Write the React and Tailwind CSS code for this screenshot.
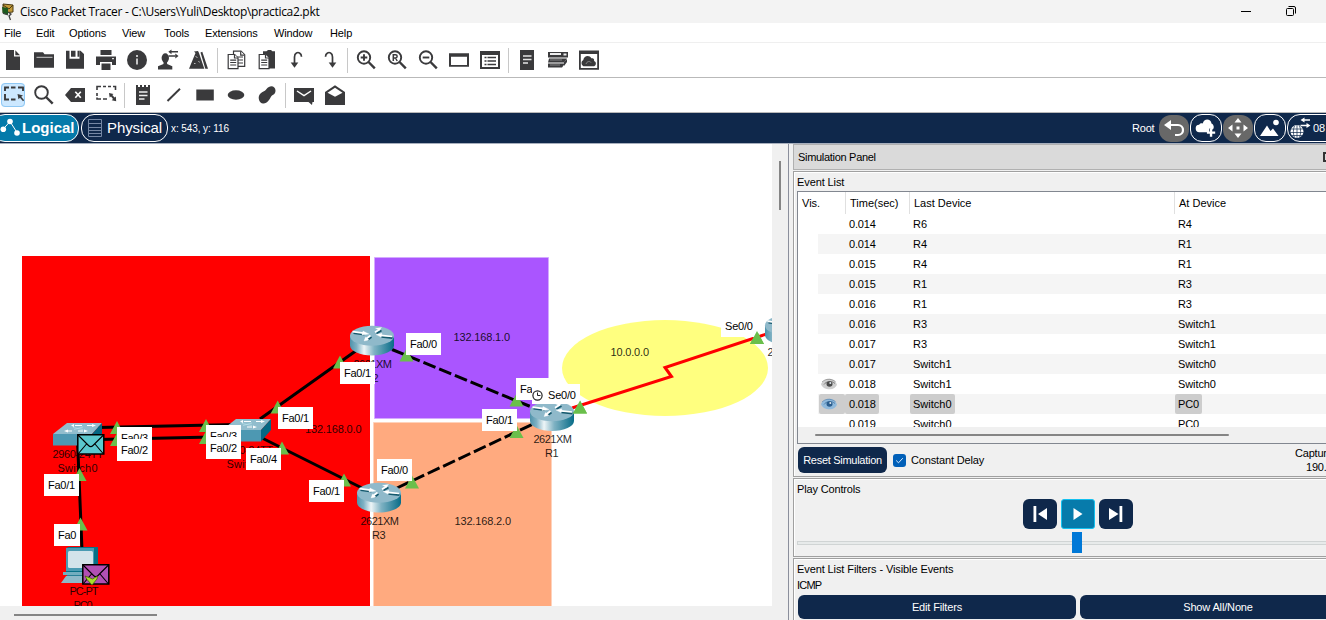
import React from "react";

const NAVY = "#0f284b";
const INK = "#3a3a3c";

function Icon({ children, active }) {
  return (
    <div
      className={
        active
          ? "mr-[7px] h-6 w-6 shrink-0 rounded-sm bg-[#cce8ff] outline outline-1 -outline-offset-1 outline-[#8fc8f4]"
          : "mr-[7px] h-6 w-6 shrink-0"
      }
    >
      <svg width="24" height="24" viewBox="0 0 24 24" fill={INK} className="block">
        {children}
      </svg>
    </div>
  );
}

function Sep() {
  return <div className="-ml-px mr-1.5 h-[25px] w-px shrink-0 bg-[#c8c8c8]" />;
}

function Magnifier({ children }) {
  return (
    <Icon>
      <circle cx="10" cy="9.5" r="6.2" fill="none" stroke={INK} strokeWidth="1.9" />
      <path d="M14.5 14l6.3 6.3" stroke={INK} strokeWidth="2.4" />
      {children}
    </Icon>
  );
}

function MainToolbar() {
  return (
    <div className="flex h-[35px] items-center border-b border-[#b9b9b9] pl-px">
      <Icon>
        <path d="M5 2h8v6.5h6V22H5z" />
        <path d="M14.3 2.2L19 7.2h-4.7z" />
      </Icon>
      <Icon>
        <path d="M2 4.3h9l1.5 2H22v13.4H2z" />
        <path d="M4.5 9.3h16" stroke="#ddd" strokeWidth="0.9" />
      </Icon>
      <Icon>
        <path d="M3 2.7h3.5v8h10v-8h1L21 6v14.7H3z" />
        <path d="M8 2.7h4.5v6H8zM14.500 2.700h2v6h-2z" />
      </Icon>
      <Icon>
        <path d="M6.500 2h11v5h-11zM2 8.500h20V17h-4v-3H6v3H2z" />
        <path d="M7.500 15.500h9V22h-9z" />
        <path d="M18 10.700h2" stroke="#fff" />
      </Icon>
      <Icon>
        <circle cx="12" cy="12" r="10" />
        <path d="M12 10.500v6M12 7v2" stroke="#ddd" strokeWidth="1.700" />
      </Icon>
      <Icon>
        <ellipse cx="9.300" cy="10" rx="3.700" ry="4.700" />
        <path d="M7.500 13h3.600v3l5.200 2.300v3.200H2v-3.200L7.500 16z" />
        <path d="M14 3.800h8M12.500 8h7" stroke={INK} strokeWidth="1.400" />
        <path d="M12.300 3.800l3.200-2.400v4.800zM22.500 8l-3.200-2.400v4.800z" />
      </Icon>
      <Icon>
        <path d="M2 20.700L8.500 5 7 3.500 11 3l1 2 5.300 15.700z" />
        <path d="M13.500 4.500l1.800-.8L21 20.700h-2.700z" />
        <path d="M8.500 8.500l2 1M7 15.500h1.500M11.500 13l1 1.500" stroke="#bbb" strokeWidth="1" fill="none" />
      </Icon>
      <Sep />
      <Icon>
        <g fill="#fff" stroke={INK} strokeWidth="1.200">
          <path d="M9.500 3.200h7.500l3.700 3.600v11.500H9.500z" />
          <path d="M16.700 3.200v4h4M12 9h7M12 12h7M12 15h7" />
          <path d="M4.200 6.500h6.500L14 10v10.700H4.200z" />
          <path d="M10.500 6.500V10H14M6.200 12.200h6M6.200 14.500h6M6.200 17h6" />
        </g>
      </Icon>
      <Icon>
        <path d="M8 3.200h3.500L13 2h3l1.300 1.200H20V20.500H8z" />
        <g fill="#fff" stroke={INK} strokeWidth="1.200">
          <path d="M4.200 6.500h6.500L14 10v10.700H4.200z" />
          <path d="M10.500 6.500V10H14M6.200 12.200h6M6.200 14.500h6M6.200 17h6" />
        </g>
      </Icon>
      <Icon>
        <path d="M8.500 16V9C8.500 4.500 12 4 13.500 5c1.300.800 2 2 2 3.700" fill="none" stroke={INK} strokeWidth="1.700" />
        <path d="M4.700 14.500h7.600l-3.800 5.300z" />
      </Icon>
      <Icon>
        <path d="M15.500 16V9c0-4.500-3.500-5-5-4-1.300.800-2 2-2 3.700" fill="none" stroke={INK} strokeWidth="1.700" />
        <path d="M11.700 14.500h7.600l-3.800 5.300z" />
      </Icon>
      <Sep />
      <Magnifier>
        <path d="M10 6.200v6.600M6.700 9.500h6.600" stroke={INK} strokeWidth="1.900" />
      </Magnifier>
      <Magnifier>
        <path d="M8.300 13V6.700h2.200a1.600 1.600 0 010 3.300H8.500m2 0l1.700 3" fill="none" stroke={INK} strokeWidth="1.500" />
      </Magnifier>
      <Magnifier>
        <path d="M6.700 9.500h6.600" stroke={INK} strokeWidth="1.900" />
      </Magnifier>
      <Icon>
        <path d="M2 5.300h20v13.500H2zM4 8.800v8.200h16V8.800z" fillRule="evenodd" />
      </Icon>
      <Icon>
        <path d="M2 3h20v18H2zM4 7v12h16V7z" fillRule="evenodd" />
        <path d="M6.500 9.500h2M6.500 13h2M6.500 16.500h2M9.500 9.500H18M9.500 13H18M9.500 16.500H18" stroke={INK} strokeWidth="1.600" />
      </Icon>
      <Sep />
      <Icon>
        <path d="M5 2h14v20H5z" />
        <path d="M8 8h8.500M8 11.500h8.500M8 15h5" stroke="#e5e5e5" strokeWidth="1.300" />
      </Icon>
      <Icon>
        <path d="M2 4h20v5.500H2zM3 10.500h18l-3 4H2zM2 15.500h17l-3 4H2z" />
        <path d="M4 6h11M17.500 6.500h3" stroke="#eee" strokeWidth="1.800" />
        <path d="M4 12h12M4 17h10" stroke="#999" strokeWidth="0.800" />
        <path d="M18 14l3-3v3l-3 4z" />
      </Icon>
      <Icon>
        <path d="M2 2.500h20v19.200H2zM3.800 6v14h16.400V6z" fillRule="evenodd" />
        <path d="M6.300 18.200a3.500 3.500 0 010-6.200c.7-4.700 6.500-5 8-1.700 3-.3 3 2 2.800 2.700 2.500 1 2.300 4.300 0 5.200z" />
        <path d="M9 16c1-3 4-3 5-1.500" stroke="#888" fill="none" />
      </Icon>
    </div>
  );
}

function DrawToolbar() {
  return (
    <div className="flex h-[35px] items-center border-b border-[#b9b9b9] pl-px">
      <Icon active>
        <path d="M4 8V4.500h4M10 4.500h4.500M17 4.500h5V8M4 11v5.500h4M10 16.500h4.500" fill="none" stroke={INK} strokeWidth="1.900" />
        <path d="M16.500 11l5.500 1.500-1.800 1.300 3 3.500-1.200 1-3-3.500-1.500 1.500z" />
      </Icon>
      <Icon>
        <circle cx="9.500" cy="9.500" r="6.300" fill="none" stroke={INK} strokeWidth="1.900" />
        <path d="M14 14l6.700 6.700" stroke={INK} strokeWidth="2.400" />
      </Icon>
      <Icon>
        <path d="M2 12l6-7h14v14H8z" />
        <path d="M12.300 8.800l5.500 6M17.800 8.800l-5.500 6" stroke="#fff" strokeWidth="1.700" />
      </Icon>
      <Icon>
        <path d="M3 7V3.500h4M9 3.500h3M14 3.500h3M19 3.500h2.500V7M3 10v3M3 14.500V16h4M9 16h4" fill="none" stroke={INK} strokeWidth="1.600" />
        <path d="M15 10l4.500 1-1.200 1 2.200 2.500 1.300-1 .4 4.700-4.500-1 1.300-1.200-2-2.500-1.300 1z" />
      </Icon>
      <Sep />
      <Icon>
        <path d="M5 2h2v2h2V2h2v2h2V2h2v2h2V2h2v20H5z" />
        <path d="M8 9h8.500M8 12.500h8.500M8 16h5.500" stroke="#eee" strokeWidth="1.300" />
      </Icon>
      <Icon>
        <path d="M5.500 18L18 5.700" stroke={INK} strokeWidth="1.900" />
      </Icon>
      <Icon>
        <path d="M3.300 6.500h17.500v11H3.300z" />
      </Icon>
      <Icon>
        <ellipse cx="12" cy="12" rx="8.300" ry="4.700" />
      </Icon>
      <Icon>
        <path d="M11.500 6C15 1.500 20.500 3 20.500 7.500S17 11.500 15.800 14 12.500 20 8.500 20.500 2.500 15 4.500 11.800 9.500 9 11.500 6z" />
      </Icon>
      <Sep />
      <Icon>
        <path d="M2 5h20v14h-1.500l-.5 3-3.500-3H2z" />
        <path d="M5 8l7 4.700L19 8" fill="none" stroke="#fff" strokeWidth="1.500" />
      </Icon>
      <Icon>
        <path d="M2 9l10-6.800L22 9v13H2z" />
        <path d="M4.500 9.700L12 4.700l7.500 5L12 13.700z" fill="#fff" />
      </Icon>
    </div>
  );
}

function NavBar() {
  return (
    <div className="flex h-[31px] items-center overflow-hidden border-b border-[#a7afbd] bg-[#0f284b] text-[11px] text-white">
      <div className="-ml-2 flex h-7 w-[87px] shrink-0 items-center rounded-[13px] border border-white bg-[#047aaa] pl-[7px]">
        <svg width="21" height="24" viewBox="0 0 21 24" fill="#fff" className="shrink-0">
          <path d="M3.300 13L10 5.500 17.300 17" fill="none" stroke="#fff" strokeWidth="1" />
          <circle cx="10" cy="5.500" r="2.800" />
          <circle cx="3.300" cy="13.300" r="2.800" />
          <circle cx="17" cy="17" r="2.800" />
        </svg>
        <span className="ml-[1px] text-[15px] leading-7 font-bold">Logical</span>
      </div>
      <div className="ml-[2px] flex h-7 w-[87px] shrink-0 items-center rounded-[13px] border border-white pl-1">
        <svg width="17" height="20" viewBox="0 0 17 20" className="shrink-0">
          <path d="M2.500 1.500h13v17h-13zM2.500 5.500h13M2.500 9.500h13M2.500 12.500h13M2.500 15.500h13" fill="none" stroke="#7587a4" />
        </svg>
        <span className="ml-1 text-[15px] leading-7 tracking-[-0.1px]">Physical</span>
      </div>
      <span className="ml-[3px] text-[10px] tracking-[-0.1px] whitespace-pre">x: 543, y: 116</span>
      <span className="ml-auto w-[27px] shrink-0 tracking-[-0.2px]">Root</span>
      <div className="flex w-[167px] shrink-0 items-center overflow-hidden">
        <div className="flex h-[27px] w-[30px] shrink-0 items-center justify-center rounded-[12px] bg-[#686868]">
          <svg width="20" height="17" viewBox="0 0 20 17" fill="#fff">
            <path d="M0 5L7 0v10z" />
            <path d="M6 5h8a4.800 4.800 0 010 10h-3" fill="none" stroke="#fff" strokeWidth="2.200" />
          </svg>
        </div>
        <div className="ml-px flex h-7 w-8 shrink-0 items-center justify-center rounded-[12px] border border-white">
          <svg width="22" height="22" viewBox="0 0 24 24" fill="#fff" className="shrink-0">
            <path d="M5 16.500a4 4 0 01-.5-8C6 6 8 7 8.500 7c1-6 9-5.500 9.500 0 3 1.500 3 5 1.500 6.500l-4-1v4z" />
            <path d="M17.500 12.500v9M13 17h9" stroke="#fff" strokeWidth="2.600" />
          </svg>
        </div>
        <div className="ml-px flex h-[27px] w-[30px] shrink-0 items-center justify-center rounded-[12px] bg-[#686868]">
          <svg width="22" height="22" viewBox="0 0 22 22" fill="#fff">
            <path d="M11 1l3.500 4.500h-7zM11 21l3.500-4.500h-7zM1 11l4.500-3.500v7zM21 11l-4.500-3.500v7zM9.500 9.500h3v3h-3z" />
          </svg>
        </div>
        <div className="ml-px flex h-7 w-8 shrink-0 items-center justify-center rounded-[12px] border border-white">
          <svg width="22" height="20" viewBox="0 0 22 20" fill="#fff">
            <path d="M1 18L8 7.500l3.500 5.500L14 10.500l5.500 7.500z" />
            <circle cx="17" cy="4.500" r="2.800" />
          </svg>
        </div>
        <div className="ml-px flex h-7 w-20 shrink-0 items-center rounded-l-[13px] border border-white pl-[2px]">
          <svg width="22" height="24" viewBox="0 0 22 24" fill="#fff" className="shrink-0">
            <circle cx="7" cy="15.500" r="6.500" />
            <path d="M1 13h12M.500 16.500h13M2 19.500h10M4.500 10c-1.500 3-1.500 8 0 11.500M9.500 10c1.500 3 1.500 8 0 11.500M7 9v13" fill="none" stroke={NAVY} strokeWidth="0.700" />
            <path d="M12.500 4h7.500M10.500 9.500h7" stroke="#fff" strokeWidth="1.500" />
            <path d="M10.500 4l4-2.500v5zM20.500 9.500l-4-2.500v5z" />
          </svg>
          <span className="ml-px">08</span>
        </div>
      </div>
    </div>
  );
}

const TRIANGLES = [
  [117, 421], [117, 433], [79.500, 468], [80.500, 517.500], [206, 419], [206, 431],
  [277.700, 400.500], [340, 355.500], [282, 441.500], [344, 473.500], [412, 475.500],
  [406.500, 348.500], [516.500, 393.500], [516.500, 425], [580, 400.500], [757, 331],
];

const LABELS = [
  [117, 427, 35, "Fa0/3"], [117, 439, 35, "Fa0/2"], [44, 474, 35, "Fa0/1"], [54, 524, 26, "Fa0"],
  [206, 425, 35, "Fa0/3"], [206, 437, 35, "Fa0/2"], [246, 448, 35, "Fa0/4"], [278, 407, 35, "Fa0/1"],
  [340, 362, 35, "Fa0/1"], [406, 333, 35, "Fa0/0"], [309, 480, 35, "Fa0/1"], [377, 459, 35, "Fa0/0"],
  [516, 378, 35, "Fa"], [482, 409, 35, "Fa0/1"],
];

const CAPTIONS = [
  [52.500, 458, 51, "2960-24TT"], [57.500, 472, 40, "Switch0"], [69.500, 595, 29, "PC-PT"], [73.500, 609, 19, "PC0"],
  [222, 454, 51, "2960-24TT"], [226.500, 468, 40, "Switch1"],
  [353.500, 368, 38.500, "2621XM"], [365, 382, 13.500, "R2"],
  [360.500, 525, 38.500, "2621XM"], [372, 539, 13.500, "R3"],
  [533.500, 443, 38.500, "2621XM"], [545, 457, 13.500, "R1"],
  [305, 433, 56.500, "132.168.0.0"], [453.500, 341, 56.500, "132.168.1.0"], [454.500, 525, 56.500, "132.168.2.0"],
  [610.500, 356, 38.500, "10.0.0.0"], [767.500, 356, 38.500, "2621XM"],
];

function Router({ x, y }) {
  return (
    <g transform={`translate(${x} ${y})`}>
      <path d="M0 10v10c0 5.500 10 10 22 10s22-4.500 22-10V10z" fill="url(#routerBody)" />
      <ellipse cx="22" cy="10.300" rx="22" ry="10" fill="#8fb9ca" />
      <g transform="translate(.5 1)" fill="#14586d" stroke="#14586d">
        <path d="M3 6.500l11 1.500M31 4l-5 3M42 11.500l-11-1.200M21 10.500l-4 3" strokeWidth="1.800" />
      </g>
      <g fill="#fff" stroke="#fff">
        <path d="M2.500 6.200l11 1.500M30 3.500l-5 3.200M42 11l-11-1.200M20.500 10l-4 3" fill="none" strokeWidth="1.700" />
        <path d="M13 5.500l6 3-7 1zM31.500 2l-6 .8 4 2zM32 7.800l-6 1.200 5 2.600zM14 15.500l1.500-4 3.500 3z" strokeWidth="0.300" />
      </g>
    </g>
  );
}

function Switch({ x, y }) {
  return (
    <g transform={`translate(${x} ${y})`}>
      <path d="M0 11L14 0h35L39 11z" fill="#91bdcd" />
      <path d="M0 11h39v11.500H0z" fill="#4d98b2" />
      <path d="M39 11L49 0v11L39 22.500z" fill="#056783" />
      <path d="M22 2.500h7M34 2.500h5M14 8h5M25 8h5" stroke="#fff" strokeWidth="1" />
      <path d="M21 1v3l-3-1.500zM39 1v3l4-1.500zM15 6.500v3l-4-1.500zM31 6.500v3l4-1.500z" fill="#fff" />
      <path d="M20 4.500l10 2M30 4l-9 2.500" stroke="#b7e1ea" strokeWidth="0.700" />
    </g>
  );
}

function Envelope({ x, y, fill, children }) {
  return (
    <g transform={`translate(${x} ${y})`}>
      <path d="M.800.800h26v19.200H.800z" fill={fill} stroke="#000" strokeWidth="1.500" />
      <path d="M1 1l10.500 10.500c1.500 1.500 3 1.500 4.500 0L26.500 1M1 20l8.500-10M26.500 20L18 10" fill="none" stroke="#000" strokeWidth="1.100" />
      {children}
    </g>
  );
}

function Diagram() {
  return (
    <svg
      width="772"
      height="462"
      viewBox="0 144 772 462"
      className="block bg-white"
      fontFamily="'Liberation Sans', Arial, sans-serif"
      fontSize="11"
    >
      <defs>
        <linearGradient id="routerBody">
          <stop offset="0" stopColor="#4e92ab" />
          <stop offset="0.150" stopColor="#7fb1c3" />
          <stop offset="0.320" stopColor="#eef5f7" />
          <stop offset="0.550" stopColor="#7fb2c3" />
          <stop offset="1" stopColor="#076c88" />
        </linearGradient>
      </defs>
      <path d="M22 256h348v350H22z" fill="#f00" />
      <path d="M374.500 257.500h174v161h-174z" fill="#aa55ff" stroke="#d4aaff" />
      <path d="M373.500 422.500h178V607h-178z" fill="#ffaa7f" stroke="#ffd2bb" />
      <ellipse cx="665" cy="368" rx="103" ry="48" fill="#ffff7f" />

      <g fill="none" stroke="#000" strokeWidth="3">
        <path d="M98 427.500L236 424.500M98 439.500L236 436.500M77.500 440L82 550M260 419L357 350M260 437L362 488" />
        <path d="M392 349.500L534 408M397 488L534 423.500" strokeDasharray="13 4" />
        <path d="M572 408L671.500 376.500 665 367.500 768 333.500" stroke="#f00" />
      </g>

      <Switch x={53} y={423} />
      <Switch x={222} y={419} />
      <Router x={350} y={325.500} />
      <Router x={357} y={482.500} />
      <Router x={530} y={401} />
      <Router x={765} y={315} />

      <g transform="translate(61 547)">
        <path d="M5 2l2-2h30v21l-4 4H5z" fill="#087087" />
        <path d="M5 1h28v23H5z" fill="#4a9ab2" />
        <rect x="7" y="4" width="25" height="17" rx="1.500" fill="#d3e3ea" />
        <path d="M6 25h20v4H6z" fill="#287f97" />
        <path d="M5 29h26l-5 7H0z" fill="#8eb8c8" />
        <path d="M2 25h28v3H2z" fill="#72adbf" />
      </g>

      <g fill="#000" fillOpacity="0.850">
        {CAPTIONS.map(([x, y, w, t], i) => (
          <text key={i} x={x} y={y} textLength={w}>{t}</text>
        ))}
      </g>

      <g fill="#6abf4b">
        {TRIANGLES.map(([x, y], i) => (
          <path key={i} d={`M${x} ${y}l7 13h-14z`} />
        ))}
      </g>

      {LABELS.map(([x, y, w, t], i) => (
        <g key={i}>
          <rect x={x} y={y} width={w} height="22" fill="#fff" />
          <text x={x + 4} y={y + 15} letterSpacing="-0.250">{t}</text>
        </g>
      ))}

      <rect x="532" y="384" width="48" height="20" fill="#fff" />
      <circle cx="537.500" cy="395.500" r="4.600" fill="#fff" stroke="#222" strokeWidth="1.200" />
      <path d="M537.500 392.500v3h3" fill="none" stroke="#222" />
      <text x="548" y="399" letterSpacing="-0.200">Se0/0</text>
      <path d="M580 400.500l7 13h-14z" fill="#6abf4b" />
      <rect x="721" y="318" width="37" height="19" fill="#fff" />
      <text x="725" y="330" letterSpacing="-0.200">Se0/0</text>
      <path d="M757 331l7 13h-14z" fill="#6abf4b" />

      <Envelope x={77} y={434} fill="#5bc8cd" />
      <Envelope x={82} y={564} fill="#b24fb4">
        <path d="M3 12l4 1.500 3.500 1.500 5-3-.5 3-5 6-5-5.500z" fill="#a8df2c" stroke="#3d5c00" strokeWidth="0.700" />
      </Envelope>
    </svg>
  );
}

const EVENTS = [
  ["0.014", "R6", "R4"],
  ["0.014", "R4", "R1"],
  ["0.015", "R4", "R1"],
  ["0.015", "R1", "R3"],
  ["0.016", "R1", "R3"],
  ["0.016", "R3", "Switch1"],
  ["0.017", "R3", "Switch1"],
  ["0.017", "Switch1", "Switch0"],
  ["0.018", "Switch1", "Switch0", "gray"],
  ["0.018", "Switch0", "PC0", "blue"],
  ["0.019", "Switch0", "PC0"],
];

function Eye({ blue }) {
  const light = blue ? "#8fb9dc" : "#cfcfcf";
  const dark = blue ? "#2a5d8e" : "#4a4a4a";
  return (
    <svg width="18" height="14" viewBox="0 0 18 14">
      <path d="M1 7C3 3 7 1.500 10 1.800c4 .3 6 3 7 6-1 2.500-4 4.500-7 4.500-5 0-8-2-9-5.300z" fill={light} />
      <path d="M2 5C5 2 10 1 15.500 4.500" fill="none" stroke={dark} strokeOpacity="0.400" />
      <path d="M4 7.500c2-3 7-4.500 11-1" fill="none" stroke={dark} strokeOpacity="0.600" />
      <ellipse cx="9.500" cy="7" rx="3" ry="2.700" fill={dark} />
      <circle cx="10.300" cy="6" r="1" fill="#dfe8ee" />
    </svg>
  );
}

function EventRow({ row, odd }) {
  const [time, last, at, eye] = row;
  const selected = eye === "blue";
  const chip = selected ? "rounded-[2px] bg-[#cdcdcd]" : "";
  return (
    <div className={`ml-5 flex h-5 shrink-0 leading-5 ${odd ? "bg-[#f5f5f5]" : "bg-white"}`}>
      <div className="flex w-[27px] shrink-0">
        <div className={`ml-px flex h-5 w-[26px] items-center pl-px ${chip}`}>{eye && <Eye blue={selected} />}</div>
      </div>
      <div className="w-[64px] shrink-0">
        <span className={`inline-block h-5 pr-[3px] pl-1 tracking-[-0.15px] ${chip}`}>{time}</span>
      </div>
      <div className="w-[265px] shrink-0">
        <span className={`ml-px inline-block h-5 px-[3px] ${chip}`}>{last}</span>
      </div>
      <span className={`ml-px inline-block h-5 px-[3px] tracking-[-0.1px] ${chip}`}>{at}</span>
    </div>
  );
}

function PlayButton({ children, active }) {
  return (
    <div
      className={`flex h-[30px] w-[34px] items-center justify-center ${
        active ? "rounded-[3px] border border-[#14c1f0] bg-[#077bab]" : "rounded-md bg-[#0f284b]"
      }`}
    >
      <svg width="18" height="18" viewBox="0 0 18 18" fill="#fff">{children}</svg>
    </div>
  );
}

const GROUP = "flex shrink-0 flex-col border-y border-l border-[#a0a0a0] bg-[#f0f0f0] shadow-[inset_1px_1px_0_#fff]";

function SimulationPanel() {
  return (
    <div className="flex w-[533px] shrink-0 flex-col overflow-hidden bg-[#f0f0f0] text-[11px] leading-[14px]">
      <div className="flex h-[26px] shrink-0 items-center border border-r-0 border-[#b0b0b0] bg-[#dadada] pl-1">
        <span className="tracking-[-0.3px]">Simulation Panel</span>
        <span className="ml-auto h-[10px] w-[3px] border-2 border-r-0 border-[#333]" />
      </div>

      <div className={`${GROUP} mt-px h-[306px] pl-[3px]`}>
        <div className="mt-[2px] mb-px h-4 shrink-0 leading-4 tracking-[-0.1px]">Event List</div>
        <div className="flex h-[253px] shrink-0 flex-col border border-r-0 border-[#828790] bg-white">
          <div className="flex h-[22px] shrink-0 leading-[22px]">
            <div className="w-[48px] border-r border-[#e0e0e0] pl-1">Vis.</div>
            <div className="w-[64px] border-r border-[#e0e0e0] pl-1">Time(sec)</div>
            <div className="w-[265px] border-r border-[#e0e0e0] pl-1">Last Device</div>
            <div className="pl-1">At Device</div>
          </div>
          <div className="flex h-[213px] shrink-0 flex-col overflow-hidden">
            {EVENTS.map((row, i) => (
              <EventRow key={i} row={row} odd={i % 2 === 1} />
            ))}
          </div>
          <div className="flex h-4 shrink-0 items-center bg-[#f0f0f0] pl-[17px]">
            <div className="h-[2px] w-[414px] rounded bg-[#858585]" />
          </div>
        </div>
        <div className="flex h-8 items-center">
          <div className="ml-px h-[26px] w-[89px] rounded-md bg-[#0f284b] text-center leading-[26px] tracking-[-0.28px] text-white">
            Reset Simulation
          </div>
          <div className="ml-1.5 flex h-[13px] w-[13px] items-center justify-center rounded-[3px] bg-[#005fb8]">
            <svg width="9" height="9" viewBox="0 0 9 9">
              <path d="M1.200 4.500l2.300 2.300 4.300-4.600" fill="none" stroke="#dcecff" />
            </svg>
          </div>
          <span className="ml-[5px] tracking-[-0.15px]">Constant Delay</span>
          <div className="ml-auto w-[31px] overflow-hidden tracking-[-0.2px]">
            <div>Captur</div>
            <div className="pl-[11px]">190.</div>
          </div>
        </div>
      </div>

      <div className={`${GROUP} mt-px h-[79px] pl-[3px]`}>
        <div className="mt-[3px] tracking-[-0.15px]">Play Controls</div>
        <div className="mt-[3px] ml-[226px] flex gap-1">
          <PlayButton>
            <path d="M2.500 1h2.800v16H2.500zM16 3v12L7 9z" />
          </PlayButton>
          <PlayButton active>
            <path d="M4.500 3l9 6-9 6z" />
          </PlayButton>
          <PlayButton>
            <path d="M12.500 1h2.800v16h-2.800zM2 3v12L11.500 9z" />
          </PlayButton>
        </div>
        <div className="mt-[3px] flex h-[21px] items-center">
          <div className="h-1 w-[275px] border border-r-0 border-[#d0d4d4] bg-[#e7eaea]" />
          <div className="h-[21px] w-2.5 bg-[#0078d7]" />
          <div className="h-1 flex-1 border-y border-[#d0d4d4] bg-[#e7eaea]" />
        </div>
      </div>

      <div className={`${GROUP} mt-px h-[70px] pl-[3px]`}>
        <div className="mt-[3px] tracking-[-0.1px]">Event List Filters - Visible Events</div>
        <div className="mt-[2px] tracking-[-0.8px]">ICMP</div>
        <div className="mt-[3px] ml-px flex gap-1 leading-6 tracking-[-0.15px] text-white">
          <div className="h-6 w-[278px] shrink-0 rounded-md bg-[#0f284b] text-center">Edit Filters</div>
          <div className="h-6 w-[276px] shrink-0 rounded-md bg-[#0f284b] text-center">Show All/None</div>
        </div>
      </div>
    </div>
  );
}

function TitleBar() {
  return (
    <div className="flex h-[23px] items-center bg-[#f3f3f3]">
      <svg width="16" height="18" viewBox="0 0 16 18">
        <path d="M3 1l10 1v7L3 10z" fill="#c29a3a" stroke="#4a3a12" />
        <path d="M3 2l6 4 4-4" fill="none" stroke="#4a3a12" />
        <path d="M2 4l6 1v7l-5-1z" fill="#1c5a20" />
        <path d="M8 9l3 2-2 2 1.500 4M8 12l-5-2" fill="none" stroke="#444" strokeWidth="1.300" />
      </svg>
      <span className="ml-1 font-['Open_Sans',sans-serif] text-[12px] tracking-[-0.310px] whitespace-nowrap">
        Cisco Packet Tracer - C:\Users\Yuli\Desktop\practica2.pkt
      </span>
      <svg width="86" height="20" viewBox="0 0 86 20" className="ml-auto" fill="none" stroke="#000">
        <path d="M1 9.500h10" />
        <rect x="46.500" y="6.500" width="7" height="7" rx="1" />
        <path d="M48.500 4.500h5.500a1.500 1.500 0 011.500 1.500v5.500" />
      </svg>
    </div>
  );
}

export default function App() {
  return (
    <div className="flex h-[620px] w-[1326px] flex-col overflow-hidden bg-white font-['Liberation_Sans',Arial,sans-serif] text-black">
      <TitleBar />
      <div className="flex h-5 items-center border-b border-[#efefef] pt-[2px] pl-1 text-[11px] tracking-[-0.12px]">
        <span className="w-8">File</span>
        <span className="w-[33px]">Edit</span>
        <span className="w-[53px]">Options</span>
        <span className="w-[42px]">View</span>
        <span className="w-[41px]">Tools</span>
        <span className="w-[69px]">Extensions</span>
        <span className="w-14">Window</span>
        <span>Help</span>
      </div>
      <MainToolbar />
      <DrawToolbar />
      <NavBar />
      <div className="flex h-[476px] shrink-0">
        <div className="flex w-[788px] shrink-0 flex-col bg-[#f0f0f0]">
          <div className="flex h-[462px]">
            <Diagram />
            <div className="flex w-4 justify-center pt-[17px]">
              <div className="h-[49px] w-[2px] bg-[#858585]" />
            </div>
          </div>
          <div className="flex h-[14px] items-center pt-[3px] pl-[14px]">
            <div className="h-[2px] w-[143px] bg-[#858585]" />
          </div>
        </div>
        <div className="w-[5px] shrink-0 border-l border-[#8b8f9c] bg-[#f0f0f0]" />
        <SimulationPanel />
      </div>
    </div>
  );
}
